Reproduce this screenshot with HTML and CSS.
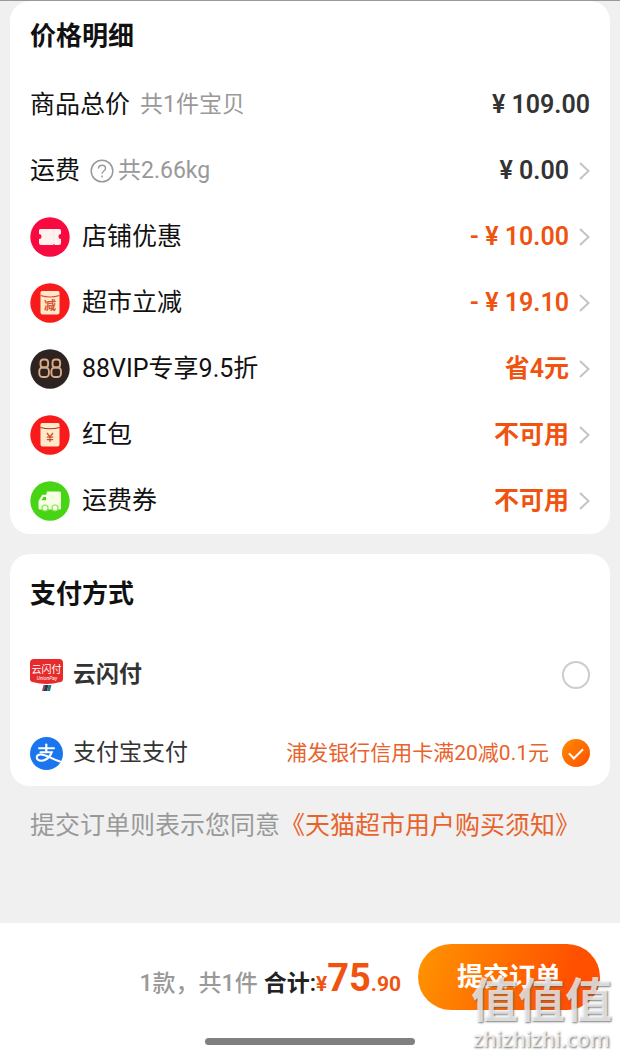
FILE: index.html
```html
<!DOCTYPE html>
<html lang="zh-CN">
<head>
<meta charset="utf-8">
<meta name="viewport" content="width=device-width, initial-scale=1">
<title>确认订单</title>
<link rel="stylesheet" href="styles.css">
</head>
<body>
<main class="content">
  <section class="card card-top">
    <h2 class="card-title">价格明细</h2>
    <div class="row">
      <span class="label">商品总价</span>
      <span class="note">共1件宝贝</span>
      <span class="value">¥ 109.00</span>
    </div>
    <button type="button" class="row">
      <span class="label">运费</span>
      <svg class="help" viewBox="0 0 24 24" aria-hidden="true"><circle cx="12" cy="12" r="10.8"/><path d="M8.5 9.6C8.5 7.4 10 6.2 12 6.2s3.5 1.3 3.5 3.2c0 2.5-3.4 2.7-3.4 5.3"/><path d="M12.1 16.6v1.8"/></svg>
      <span class="note">共2.66kg</span>
      <span class="value">¥ 0.00</span>
      <svg class="chevron" viewBox="0 0 11 18" aria-hidden="true"><path d="M1 1l8.500 8-8.500 8"/></svg>
    </button>
    <button type="button" class="row">
      <svg class="badge" viewBox="0 0 40 40" aria-hidden="true"><circle cx="20" cy="20" r="19.700" fill="#f8093f"/><path d="M11 12h18.500a1.500 1.500 0 0 1 1.500 1.500v3.500a2.500 2.500 0 0 0 0 5v4a2 2 0 0 1-2 2h-4l-1-1-1 1H11a2 2 0 0 1-2-2v-4a2.500 2.500 0 0 0 0-5v-3.500a1.500 1.500 0 0 1 2-1.500z" fill="#fff1ee"/><path d="M23.500 13v13" stroke="#ffe0e2" stroke-dasharray="2 2"/></svg>
      <span class="label">店铺优惠</span>
      <span class="value accent">- ¥ 10.00</span>
      <svg class="chevron" viewBox="0 0 11 18" aria-hidden="true"><path d="M1 1l8.500 8-8.500 8"/></svg>
    </button>
    <button type="button" class="row">
      <svg class="badge" viewBox="0 0 40 40" aria-hidden="true"><circle cx="20" cy="20" r="19.700" fill="#f91a1b"/><path d="M12 8h16a1.500 1.500 0 0 1 1.500 1.500v20a2 2 0 0 1-2 2h-15a2 2 0 0 1-2-2v-20A1.500 1.500 0 0 1 12 8z" fill="#ffe9c8"/><path d="M10.500 12.500q9.500 3 19 0" fill="none" stroke="#e8463a" stroke-width="1.200"/><text x="20" y="27" text-anchor="middle" class="badge-char">减</text></svg>
      <span class="label">超市立减</span>
      <span class="value accent">- ¥ 19.10</span>
      <svg class="chevron" viewBox="0 0 11 18" aria-hidden="true"><path d="M1 1l8.500 8-8.500 8"/></svg>
    </button>
    <button type="button" class="row">
      <svg class="badge" viewBox="0 0 40 40" aria-hidden="true"><circle cx="20" cy="20" r="19.700" fill="#2d2422"/><g fill="none" stroke="#dda883" stroke-width="1.900"><rect x="10.500" y="10.500" width="7.600" height="8" rx="3"/><rect x="9.300" y="18.500" width="9.600" height="9.500" rx="3.500"/><rect x="22.500" y="10.500" width="7.600" height="8" rx="3"/><rect x="21.400" y="18.500" width="9.600" height="9.500" rx="3.500"/></g></svg>
      <span class="label">88VIP专享9.5折</span>
      <span class="value accent">省4元</span>
      <svg class="chevron" viewBox="0 0 11 18" aria-hidden="true"><path d="M1 1l8.500 8-8.500 8"/></svg>
    </button>
    <button type="button" class="row">
      <svg class="badge" viewBox="0 0 40 40" aria-hidden="true"><circle cx="20" cy="20" r="19.700" fill="#f91a1b"/><path d="M12 8h16a1.500 1.500 0 0 1 1.500 1.500v20a2 2 0 0 1-2 2h-15a2 2 0 0 1-2-2v-20A1.500 1.500 0 0 1 12 8z" fill="#ffe9c8"/><path d="M10.500 12.500q9.500 2.500 19 0" fill="none" stroke="#a8342c" stroke-width="1.200"/><path d="M17 18l3 4 3-4M20 22v5M16.800 22.200h6.400M16.800 24.700h6.400" fill="none" stroke="#c8502f" stroke-width="1.300"/></svg>
      <span class="label">红包</span>
      <span class="value accent">不可用</span>
      <svg class="chevron" viewBox="0 0 11 18" aria-hidden="true"><path d="M1 1l8.500 8-8.500 8"/></svg>
    </button>
    <button type="button" class="row">
      <svg class="badge" viewBox="0 0 40 40" aria-hidden="true"><circle cx="20" cy="20" r="19.700" fill="#46d414"/><path d="M17 10.500h12.500a1.500 1.500 0 0 1 1.500 1.500v15a1.500 1.500 0 0 1-1.500 1.500H10a1.500 1.500 0 0 1-1.500-1.500v-7l3.700-6.300h4z" fill="#f4ffe4"/><path d="M11.500 19.300l2-3.300H16v3.300z" fill="#46d414"/><g fill="#f4ffe4" stroke="#8bdf55" stroke-width="1.200"><circle cx="15" cy="27" r="3"/><circle cx="25" cy="27" r="3"/></g></svg>
      <span class="label">运费券</span>
      <span class="value accent">不可用</span>
      <svg class="chevron" viewBox="0 0 11 18" aria-hidden="true"><path d="M1 1l8.500 8-8.500 8"/></svg>
    </button>
  </section>

  <section class="card">
    <h2 class="card-title pay-title">支付方式</h2>
    <div class="pay-list">
      <label class="pay-row">
        <svg class="pay-icon" viewBox="0 0 33 33" aria-hidden="true"><path d="M4 0h25a4 4 0 0 1 4 4v16a3 3 0 0 1-2.500 3Q16.500 27 2.500 23A3 3 0 0 1 0 20V4a4 4 0 0 1 4-4z" fill="#e72b2c"/><text x="16.500" y="14" text-anchor="middle" class="union-name">云闪付</text><text x="17" y="20.500" text-anchor="middle" class="union-sub">UnionPay</text><path d="M13.500 26h3l-1.500 6h-3z" fill="#b53c50"/><path d="M15.500 26h3l-1.500 6h-3z" fill="#173d54"/><path d="M18.500 26h3l-1.500 6h-3z" fill="#297a79"/></svg>
        <span class="pay-name strong">云闪付</span>
        <input class="radio" type="radio" name="pay" value="union">
      </label>
      <label class="pay-row">
        <svg class="pay-icon" viewBox="0 0 33 33" aria-hidden="true"><circle cx="16.500" cy="16.500" r="16.500" fill="#1a75ee"/><g fill="none" stroke="#fff" stroke-linecap="round"><path d="M9 11.200h15" stroke-width="2"/><path d="M16.300 7.500v7.500" stroke-width="2.200"/><path d="M10.500 15.300h11.200c-1.700 5-6 8.400-10.200 8.400-6.500 0-6-6.200-.5-6.200 5 0 8.500 3.600 19 7" stroke-width="2.100"/></g></svg>
        <span class="pay-name">支付宝支付</span>
        <span class="pay-promo">浦发银行信用卡满20减0.1元</span>
        <input class="radio" type="radio" name="pay" value="alipay" checked>
      </label>
    </div>
  </section>

  <p class="terms">提交订单则表示您同意<a href="#terms">《天猫超市用户购买须知》</a></p>
</main>

<footer class="footer">
  <div class="checkout">
    <p class="summary"><span class="count">1款，共1件</span><span class="total-label">合计:</span><span class="total"><span class="small">¥</span>75<span class="small">.90</span></span></p>
    <button type="submit" class="submit">提交订单</button>
  </div>
  <div class="home-bar"></div>
  <div class="watermark"><span class="mark-name">值值值</span><span class="mark-site">zhizhizhi.com</span></div>
</footer>
</body>
</html>
```
FILE: styles.css
```css
* { box-sizing: border-box; }

body {
  margin: 0;
  min-height: 100vh;
  display: flex;
  flex-direction: column;
  background: #f0f0f0;
  border-top: 1px solid #999;
  color: #111;
  font-family: Roboto, "Noto Sans CJK SC", sans-serif;
}

button, input { font: inherit; color: inherit; }

.content {
  flex: 1;
  padding: 0 10px;
}

.card {
  background: #fff;
  border-radius: 20px;
  padding: 0 20px;
  margin-bottom: 20px;
}

.card-title {
  margin: 0;
  font-size: 26px;
  line-height: 71px;
  font-weight: 700;
}

.row {
  display: flex;
  align-items: center;
  width: 100%;
  height: 66px;
  padding: 0;
  border: 0;
  background: none;
  text-align: left;
  font-size: 25px;
  line-height: 30px;
}

.label { font-weight: 400; }

.badge {
  width: 40px;
  height: 40px;
  margin-right: 12px;
}

.badge-char {
  font-family: "Noto Sans CJK SC", sans-serif;
  font-size: 12px;
  font-weight: 700;
  fill: #d8502f;
}

.note {
  margin-left: 10px;
  font-size: 23px;
  color: #999;
}

.help {
  width: 24px;
  height: 24px;
  margin-left: 10px;
  fill: none;
  stroke: #999;
  stroke-width: 1.5;
}

.help + .note { margin-left: 4px; }

.value {
  margin-left: auto;
  font-weight: 600;
  color: #333;
}

.accent { color: #f0530f; }

.chevron {
  width: 11px;
  height: 18px;
  margin-left: 10px;
  fill: none;
  stroke: #c4c4c4;
  stroke-width: 2;
}

.pay-title { line-height: 80px; }

.pay-list {
  display: flex;
  flex-direction: column;
  gap: 12px;
  padding-top: 8px;
}

.pay-row {
  display: flex;
  align-items: center;
  height: 66px;
  line-height: 30px;
}

.pay-icon {
  width: 33px;
  height: 33px;
  margin-right: 10px;
}

.union-name {
  font-family: "Noto Sans CJK SC", sans-serif;
  font-size: 10px;
  fill: #fff;
}

.union-sub {
  font-size: 5px;
  font-style: italic;
  fill: #fff;
}

.pay-name {
  font-size: 23px;
  color: #333;
}

.strong { font-weight: 600; }

.pay-promo {
  margin-left: auto;
  font-size: 21px;
  color: #e8632c;
}

.radio {
  appearance: none;
  display: grid;
  place-items: center;
  width: 28px;
  height: 28px;
  margin: 0 0 0 auto;
  border: 2px solid #ccc;
  border-radius: 50%;
}

.pay-promo + .radio { margin-left: 13px; }

.radio:checked {
  border: 0;
  background: linear-gradient(135deg, #ff8a00, #ff5000);
}

.radio:checked::before {
  content: "";
  width: 12px;
  height: 6px;
  margin-bottom: 3px;
  border: solid #fff;
  border-width: 0 0 2px 2px;
  rotate: -45deg;
}

.terms {
  margin: 0 20px;
  font-size: 25px;
  line-height: 40px;
  color: #999;
}

.terms a {
  color: #e8632c;
  text-decoration: none;
}

.footer {
  position: relative;
  padding: 21px 20px 12px;
  background: #fff;
}

.checkout {
  display: flex;
  justify-content: flex-end;
  align-items: center;
  gap: 17px;
}

.summary {
  display: flex;
  align-items: baseline;
  margin: 0;
  padding-top: 7px;
  font-size: 23px;
  line-height: 48px;
}

.count {
  margin-right: 6px;
  font-weight: 500;
  color: #999;
}

.total-label {
  font-weight: 600;
  color: #222;
}

.total {
  font-size: 38px;
  font-weight: 700;
  color: #f0530f;
}

.small { font-size: 21px; }

.submit {
  width: 182px;
  height: 66px;
  padding: 0;
  border: 0;
  border-radius: 33px;
  background: linear-gradient(110deg, #ff9500, #ff5000 80%);
  color: #fff;
  font-size: 26px;
  line-height: 30px;
  font-weight: 700;
}

.home-bar {
  width: 210px;
  height: 7px;
  margin: 28px auto 0;
  border-radius: 4px;
  background: #808080;
}

.watermark {
  position: absolute;
  right: 8px;
  bottom: 5px;
  display: flex;
  flex-direction: column;
  align-items: center;
  color: rgba(255, 255, 255, 0.72);
  text-shadow: 1px 1px 2px rgba(90, 90, 90, 0.8);
  pointer-events: none;
}

.mark-name {
  font-size: 47px;
  line-height: 50px;
  font-weight: 700;
}

.mark-site {
  font-family: "Open Sans", sans-serif;
  font-size: 21px;
  line-height: 26px;
  font-weight: 600;
}
```
